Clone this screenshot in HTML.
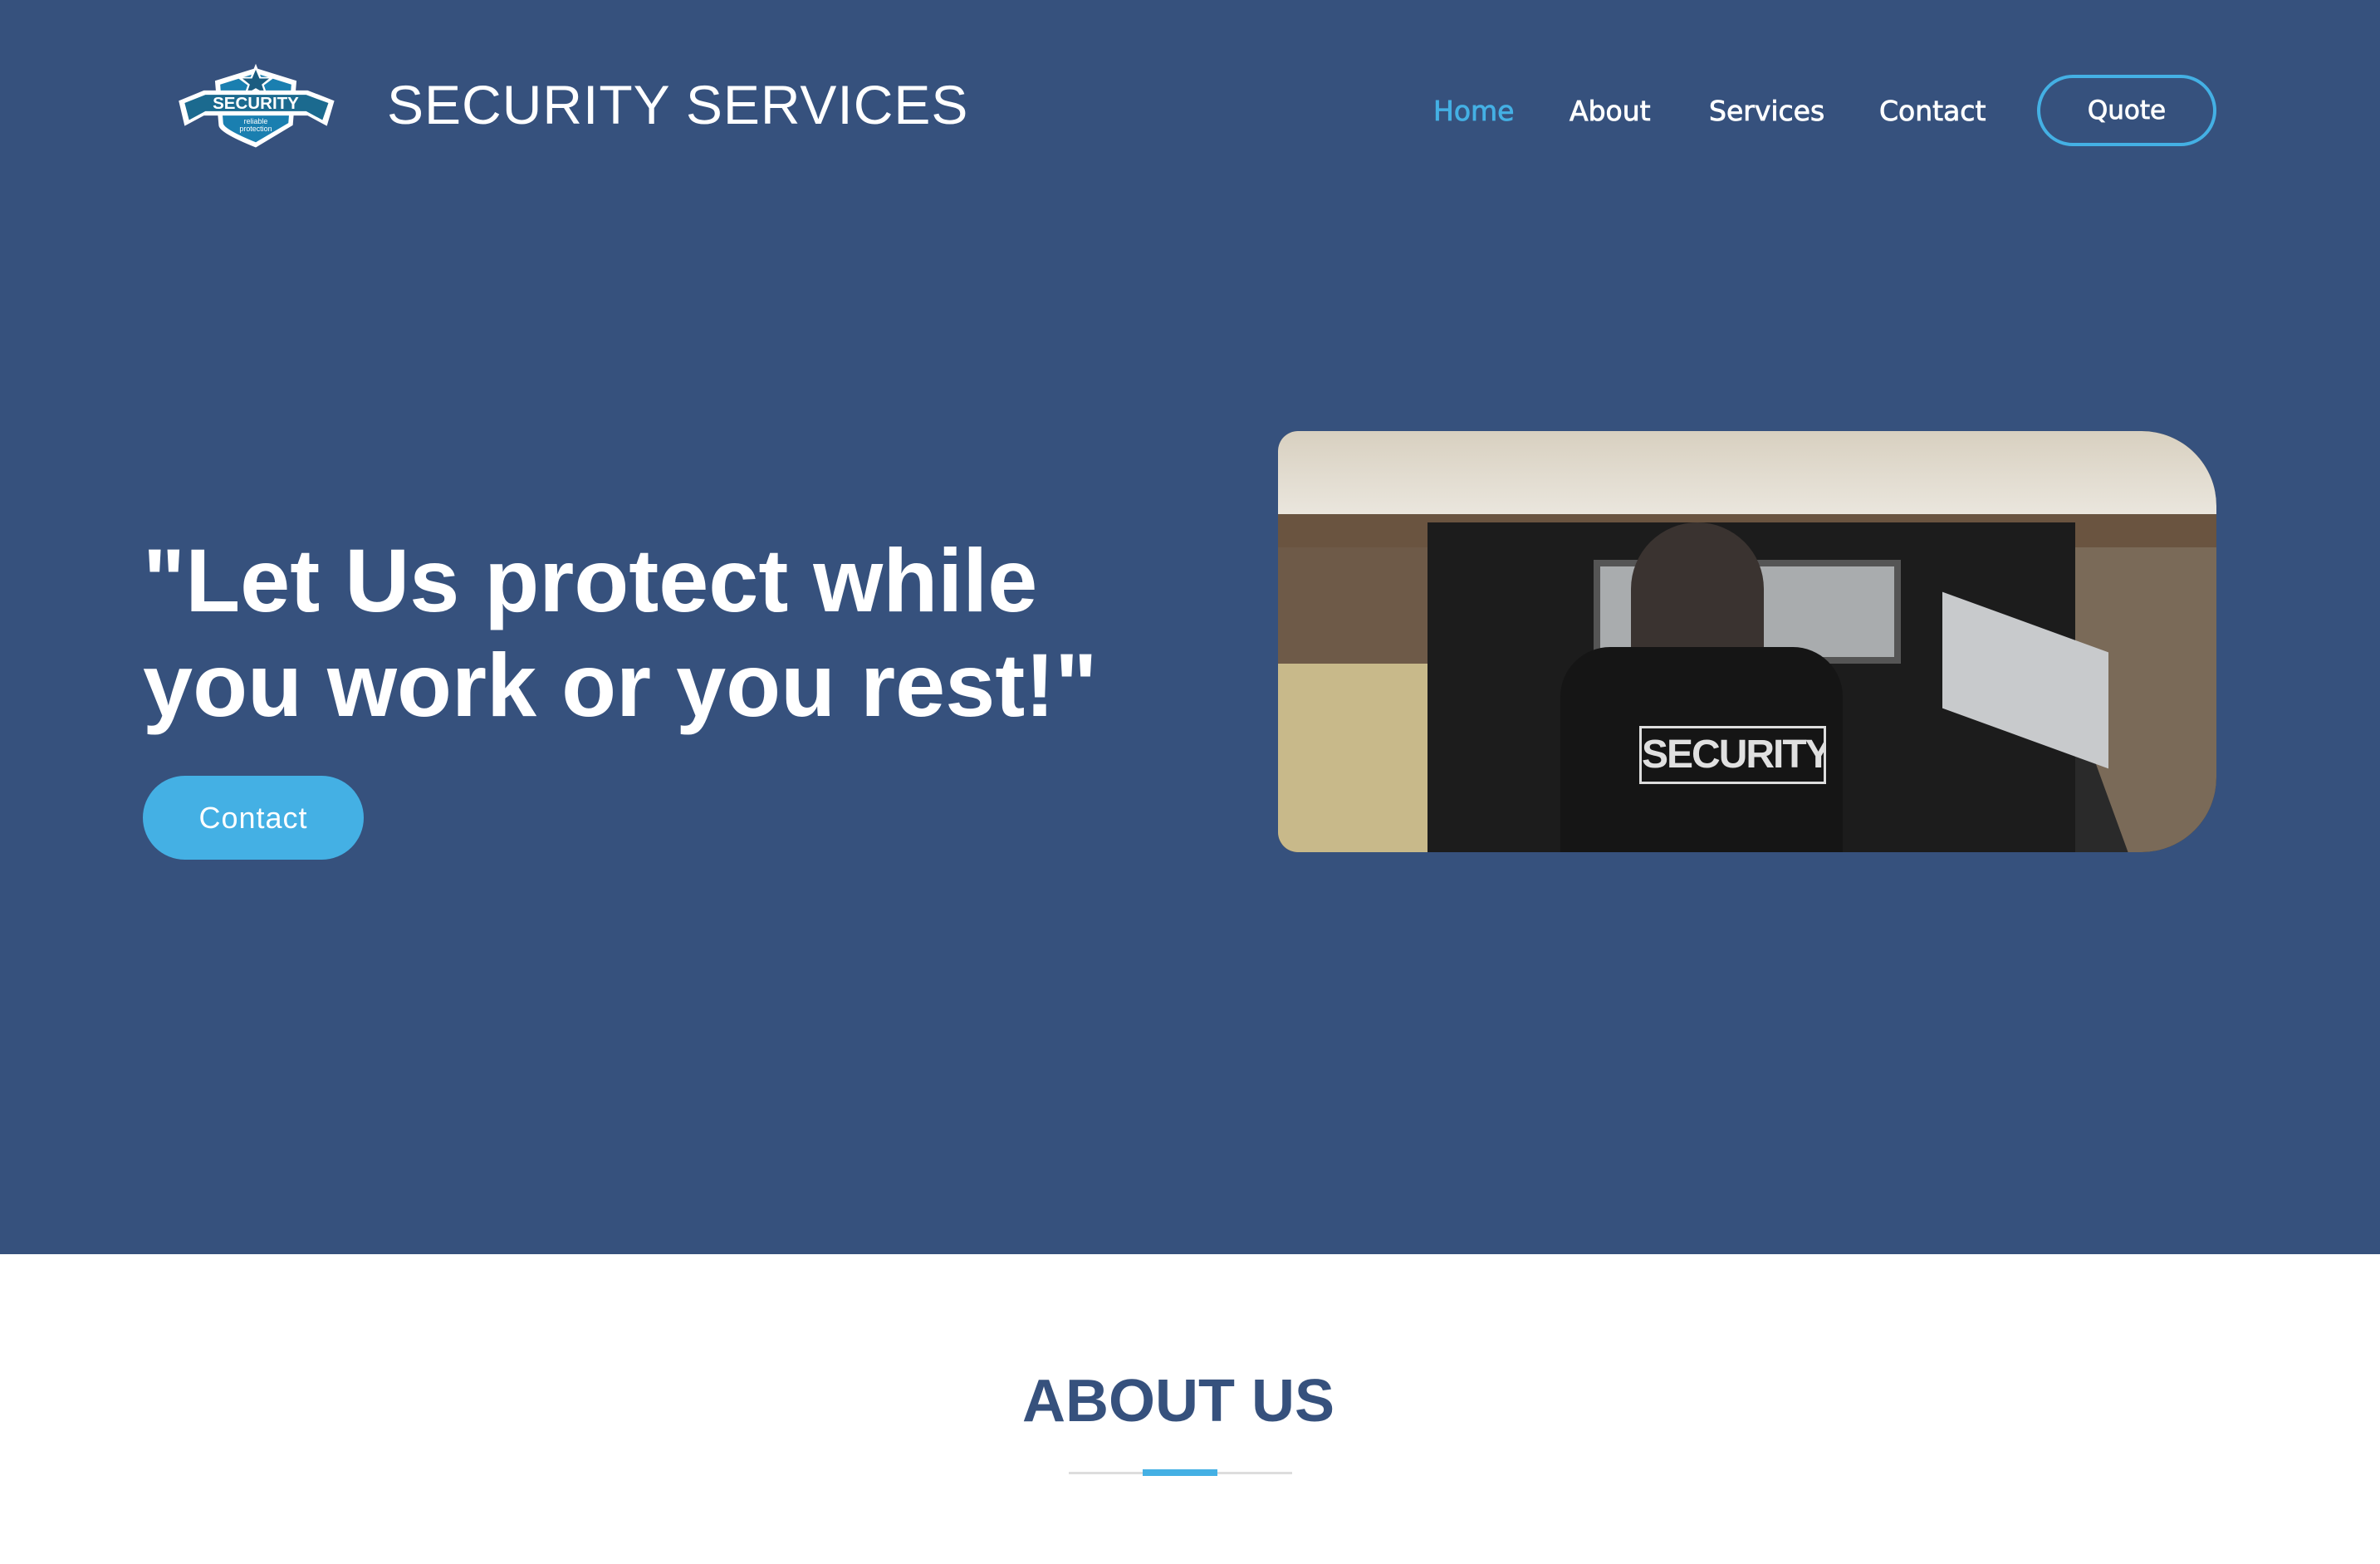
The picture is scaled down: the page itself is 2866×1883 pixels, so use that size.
<!DOCTYPE html>
<html><head><meta charset="utf-8"><style>
*{margin:0;padding:0;box-sizing:border-box}
body{width:2866px;height:1883px;overflow:hidden;background:#fff;font-family:"Liberation Sans",Arial,sans-serif}
.hero{position:absolute;left:0;top:0;width:2866px;height:1510px;background:#36517d}
.title{position:absolute;left:466px;top:88px;font-size:66px;color:#fff;letter-spacing:1px}
.nav{position:absolute;top:114px;font-size:33px;color:#fff;font-family:"DejaVu Sans","Liberation Sans",sans-serif;font-weight:normal;-webkit-text-stroke:0.8px currentColor}
.quote{position:absolute;left:2453px;top:90px;width:216px;height:86px;border:4px solid #44b0e4;border-radius:43px;color:#fff;font-size:31px;font-family:"DejaVu Sans",sans-serif;-webkit-text-stroke:0.8px #fff;text-align:center;line-height:78px}
h1{position:absolute;left:172px;top:636px;color:#fff;font-size:108px;line-height:126px;font-weight:bold}
.btn{position:absolute;left:172px;top:934px;width:266px;height:101px;border-radius:51px;background:#44b0e4;color:#fff;font-size:36px;text-align:center;line-height:101px;letter-spacing:1px}
.img{position:absolute;left:1539px;top:519px;width:1130px;height:507px;border-radius:24px 90px 90px 24px;overflow:hidden;background:#2a2a2a}
.about{position:absolute;left:0;width:2838px;top:1646px;text-align:center;color:#36517d;font-size:72px;font-weight:bold}
</style></head><body>
<div class="hero">
<svg style="position:absolute;left:206px;top:66px" width="204" height="116" viewBox="0 0 220 130">
<path d="M55 35 L110 18 L165 35 L160 95 Q110 125 110 125 Q60 105 60 95 Z" fill="#fff"/>
<path d="M62 40 L110 25 L158 40 L154 92 Q110 118 110 118 Q66 100 66 92 Z" fill="#1a7fb0"/>
<polygon points="110,12 117,30 136,30 121,41 127,58 110,48 93,58 99,41 84,30 103,30" fill="#fff"/>
<polygon points="110,20 115,32 128,32 118,40 122,52 110,45 98,52 102,40 92,32 105,32" fill="#1b5c80"/>
<path d="M6 62 L40 48 L180 48 L216 62 L206 96 L180 82 L40 82 L14 96 Z" fill="#fff"/>
<path d="M14 65 L42 54 L178 54 L208 65 L200 88 L178 76 L42 76 L20 88 Z" fill="#1b6a8f"/>
<text x="110" y="73" fill="#fff" font-family="Liberation Sans" font-weight="bold" font-size="23" text-anchor="middle">SECURITY</text>
<text x="110" y="93" fill="#fff" font-family="Liberation Sans" font-size="10" text-anchor="middle">reliable</text>
<text x="110" y="103" fill="#fff" font-family="Liberation Sans" font-size="10" text-anchor="middle">protection</text>
</svg>
<div class="title">SECURITY SERVICES</div>
<div class="nav" style="left:1726px;color:#44b0e4">Home</div>
<div class="nav" style="left:1890px">About</div>
<div class="nav" style="left:2058px">Services</div>
<div class="nav" style="left:2263px">Contact</div>
<div class="quote">Quote</div>
<h1>"Let Us protect while<br>you work or you rest!"</h1>
<div class="btn">Contact</div>
<div class="img">
<div style="position:absolute;left:0;top:0;width:100%;height:110px;background:linear-gradient(#d8d0c0,#ece8e0)"></div>
<div style="position:absolute;left:0;top:100px;width:100%;height:60px;background:#6a5440"></div>
<div style="position:absolute;left:0;top:140px;width:240px;height:367px;background:#6e5a48;transform:skewX(-20deg);transform-origin:top left"></div>
<div style="position:absolute;right:0;top:140px;width:240px;height:367px;background:#7a6a58;transform:skewX(20deg);transform-origin:top right"></div>
<div style="position:absolute;left:0;top:280px;width:220px;height:227px;background:#c8b98a"></div>
<div style="position:absolute;left:180px;top:110px;width:780px;height:397px;background:#1c1c1c"></div>
<div style="position:absolute;left:380px;top:155px;width:370px;height:125px;background:#a9acae;border:8px solid #555"></div>
<div style="position:absolute;left:800px;top:230px;width:200px;height:140px;background:#c8cacc;transform:skewY(20deg)"></div>
<div style="position:absolute;left:425px;top:110px;width:160px;height:190px;border-radius:80px 80px 40px 40px;background:#3a3330"></div>
<div style="position:absolute;left:340px;top:260px;width:340px;height:260px;border-radius:60px 60px 0 0;background:#151515"></div>
<div style="position:absolute;left:435px;top:355px;width:225px;height:70px;border:3px solid #ddd;color:#e0e0e0;font-size:48px;font-weight:bold;text-align:center;line-height:64px;letter-spacing:-2px;white-space:nowrap;overflow:hidden">SECURITY</div>
</div>
</div>
<div class="about">ABOUT US</div>
<div style="position:absolute;left:1287px;top:1772px;width:269px;height:3px;background:#ddd"></div>
<div style="position:absolute;left:1376px;top:1769px;width:90px;height:8px;background:#44b0e4"></div>
</body></html>
